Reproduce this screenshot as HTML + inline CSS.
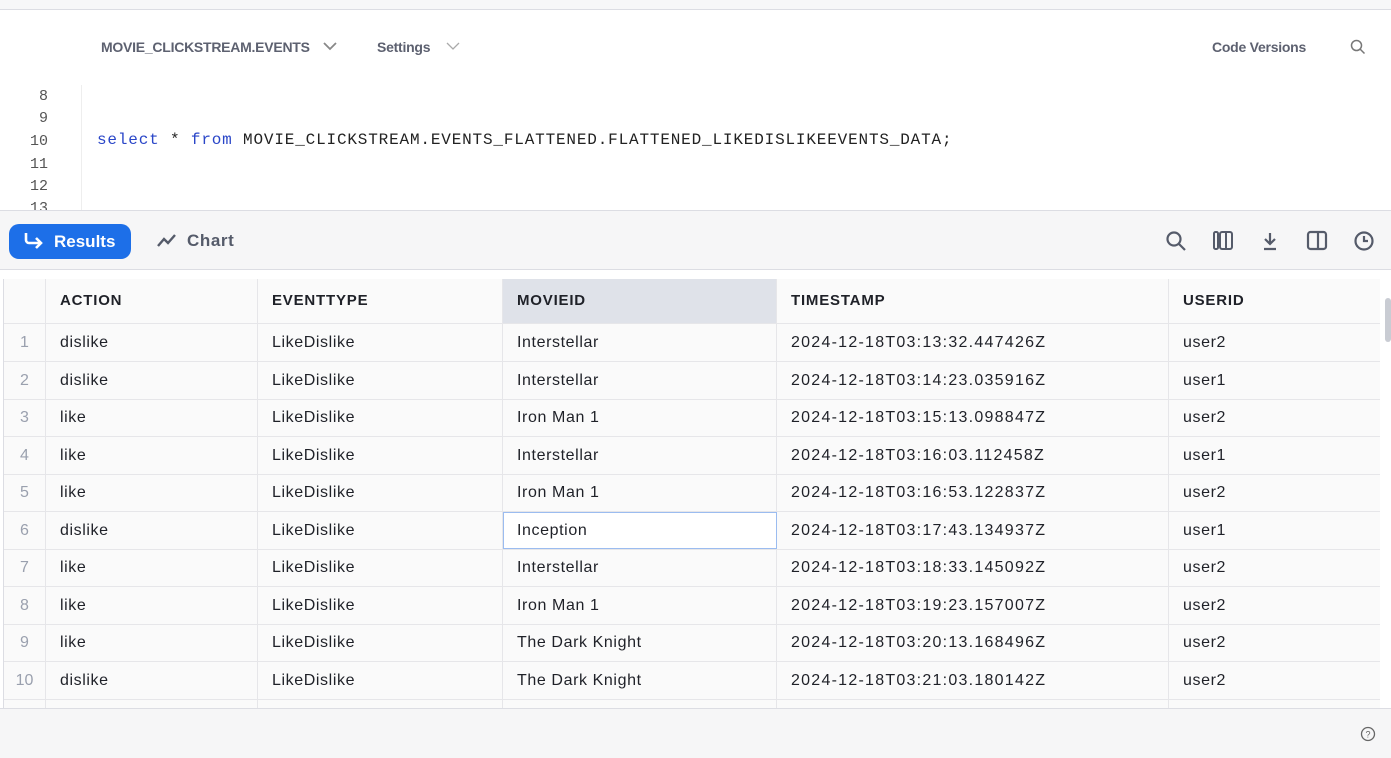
<!DOCTYPE html>
<html><head><meta charset="utf-8"><style>
*{margin:0;padding:0;box-sizing:border-box}
body{width:1391px;height:758px;overflow:hidden;background:#fff;font-family:"Liberation Sans",sans-serif;position:relative}
.top{position:absolute;left:0;top:0;width:1391px;height:10px;background:#f7f7f8;border-bottom:1px solid #dcdde3}
.nav{position:absolute;top:39px;font-size:14px;color:#5d6170;font-weight:bold;letter-spacing:-0.25px}
.chev{position:absolute;top:41px}
.gut{position:absolute;left:0;top:85px;width:82px;height:125px;border-right:1px solid #eee}
.ln{position:absolute;width:48px;text-align:right;font-family:"Liberation Mono",monospace;font-size:15px;color:#555}
.code{position:absolute;left:97px;top:131px;font-family:"Liberation Mono",monospace;font-size:16px;letter-spacing:0.83px;color:#222;white-space:pre}
.kw{color:#2a46c8}
.bar{position:absolute;left:0;top:210px;width:1391px;height:60px;background:#f6f6f7;border-top:1px solid #dcdde3;border-bottom:1px solid #dcdde3}
.btn{position:absolute;left:9px;top:13px;width:122px;height:35px;background:#1d6fe8;border-radius:10px;color:#fff;font-weight:bold;font-size:17px}
.tbl{position:absolute;left:3px;top:279px;width:1377px;height:430px;overflow:hidden;border-left:1px solid #dcdde3;background:#fafafa}
.r{position:absolute;left:0;height:38px;width:1377px;border-bottom:1px solid #e6e6e9}
.c{position:absolute;top:0;height:100%;border-right:1px solid #e6e6e9;font-size:16px;letter-spacing:0.6px;color:#1f2128;padding-left:14px;line-height:37px;white-space:nowrap}
.ts{letter-spacing:1.25px}
.h .c{font-weight:bold;font-size:15px;letter-spacing:0.8px;line-height:44px;color:#1f2128}
.n{color:#9aa0ae;text-align:center;padding-left:0;letter-spacing:0}
.foot{position:absolute;left:0;top:708px;width:1391px;height:50px;background:#f6f6f7;border-top:1px solid #dcdde3}
</style></head><body>
<div class="top"></div>
<div class="nav" style="left:101px">MOVIE_CLICKSTREAM.EVENTS</div>
<svg class="chev" style="left:323px" width="14" height="10"><path d="M1 2l6 6 6-6" stroke="#888" stroke-width="1.8" fill="none"/></svg>
<div class="nav" style="left:377px">Settings</div>
<svg class="chev" style="left:446px" width="14" height="10"><path d="M1 2l6 6 6-6" stroke="#aaa" stroke-width="1.3" fill="none"/></svg>
<div class="nav" style="left:1212px">Code Versions</div>
<svg style="position:absolute;left:1350px;top:39px" width="16" height="16"><circle cx="6.5" cy="6.5" r="5" stroke="#777" stroke-width="1.5" fill="none"/><path d="M10 10l4.5 4.5" stroke="#777" stroke-width="1.5"/></svg>
<div class="gut"></div>
<div class="ln" style="top:88px">8</div>
<div class="ln" style="top:110px">9</div>
<div class="ln" style="top:133px">10</div>
<div class="ln" style="top:156px">11</div>
<div class="ln" style="top:178px">12</div>
<div class="ln" style="top:200px;height:10px;overflow:hidden">13</div>
<div class="code"><span class="kw">select</span> * <span class="kw">from</span> MOVIE_CLICKSTREAM.EVENTS_FLATTENED.FLATTENED_LIKEDISLIKEEVENTS_DATA;</div>
<div class="bar">
 <div class="btn"><svg style="position:absolute;left:14px;top:8px" width="22" height="18"><path d="M3 1v7a3 3 0 0 0 3 3h12M13 6l5 5-5 5" stroke="#fff" stroke-width="2.6" fill="none"/></svg><span style="position:absolute;left:45px;top:8px">Results</span></div>
 <svg style="position:absolute;left:157px;top:22px" width="20" height="16"><path d="M1 13l6-7 4 4 7-8" stroke="#555b6a" stroke-width="2.4" fill="none"/></svg>
 <div style="position:absolute;left:187px;top:20px;font-size:17px;font-weight:bold;color:#555b6a;letter-spacing:0.6px">Chart</div>
 <svg style="position:absolute;left:1165px;top:19px" width="22" height="22"><circle cx="9" cy="9" r="6.5" stroke="#555b6a" stroke-width="2.2" fill="none"/><path d="M14 14l6 6" stroke="#555b6a" stroke-width="2.2"/></svg>
 <svg style="position:absolute;left:1212px;top:19px" width="22" height="22"><rect x="2" y="2" width="4" height="17" rx="1.5" stroke="#555b6a" stroke-width="2" fill="none"/><rect x="8" y="2" width="12" height="17" rx="2" stroke="#555b6a" stroke-width="2" fill="none"/><path d="M14 2v17" stroke="#555b6a" stroke-width="2"/></svg>
 <svg style="position:absolute;left:1261px;top:19px" width="18" height="22"><path d="M9 3v11M4 9l5 5 5-5M3 19h12" stroke="#555b6a" stroke-width="2.2" fill="none"/></svg>
 <svg style="position:absolute;left:1306px;top:19px" width="22" height="22"><rect x="2" y="2" width="18" height="17" rx="2.5" stroke="#555b6a" stroke-width="2.2" fill="none"/><path d="M12 2v17" stroke="#555b6a" stroke-width="2.2"/></svg>
 <svg style="position:absolute;left:1353px;top:19px" width="22" height="22"><circle cx="11" cy="11" r="8.5" stroke="#555b6a" stroke-width="2.2" fill="none"/><path d="M11 6v5h4" stroke="#555b6a" stroke-width="2.2" fill="none"/></svg>
</div>
<div class="tbl">
 <div class="r h" style="top:0;height:45px">
  <div class="c" style="left:0;width:42px"></div>
  <div class="c" style="left:42px;width:212px">ACTION</div>
  <div class="c" style="left:254px;width:245px">EVENTTYPE</div>
  <div class="c" style="left:499px;width:274px;background:#dfe2e9">MOVIEID</div>
  <div class="c" style="left:773px;width:392px">TIMESTAMP</div>
  <div class="c" style="left:1165px;width:212px">USERID</div>
 </div>
 <div id="rows"></div>
</div>
<div style="position:absolute;left:1385px;top:298px;width:6px;height:44px;background:#c9ccd3;border-radius:3px"></div>
<div class="foot"><svg style="position:absolute;left:1360px;top:17px" width="16" height="16"><circle cx="8" cy="8" r="6.5" stroke="#666" stroke-width="1.3" fill="none"/><text x="8" y="11.5" font-size="9" text-anchor="middle" fill="#666" font-family="Liberation Sans">?</text></svg></div>
<script>
var d=[["dislike","Interstellar","13:32.447426Z","user2"],["dislike","Interstellar","14:23.035916Z","user1"],["like","Iron Man 1","15:13.098847Z","user2"],["like","Interstellar","16:03.112458Z","user1"],["like","Iron Man 1","16:53.122837Z","user2"],["dislike","Inception","17:43.134937Z","user1"],["like","Interstellar","18:33.145092Z","user2"],["like","Iron Man 1","19:23.157007Z","user2"],["like","The Dark Knight","20:13.168496Z","user2"],["dislike","The Dark Knight","21:03.180142Z","user2"],["","","",""]];
var h="";
d.forEach(function(x,i){var t=45+i*37.5;var n=i<10?i+1:"";var ts=x[2]?"2024-12-18T03:"+x[2]:"";
var sel=i==5?"outline:1px solid #9bbcf0;outline-offset:-1px;background:#fff;":"";
h+='<div class="r" style="top:'+t+'px"><div class="c n" style="left:0;width:42px">'+n+'</div><div class="c" style="left:42px;width:212px">'+x[0]+'</div><div class="c" style="left:254px;width:245px">'+(x[0]?"LikeDislike":"")+'</div><div class="c" style="left:499px;width:274px;'+sel+'">'+x[1]+'</div><div class="c ts" style="left:773px;width:392px">'+ts+'</div><div class="c" style="left:1165px;width:212px">'+x[3]+'</div></div>';});
document.getElementById("rows").innerHTML=h;
</script>
</body></html>
